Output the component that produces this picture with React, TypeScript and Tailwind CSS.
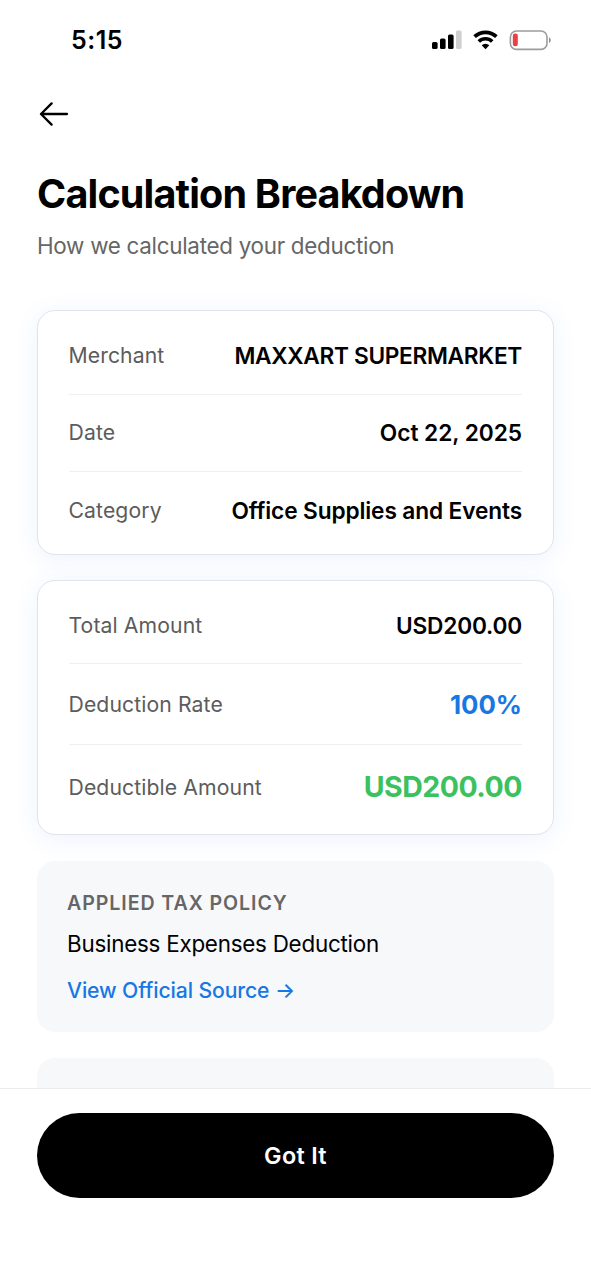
import React from 'react';
import clsx from 'clsx';

interface RowProps {
  label: string;
  value: string;
  rowClass: string;
  valueClass: string;
}

const merchantRows: RowProps[] = [
  {
    label: 'Merchant',
    value: 'MAXXART SUPERMARKET',
    rowClass: 'h-[77px] border-b',
    valueClass: 'text-[22.7px] tracking-[-0.32px] font-semibold text-black',
  },
  {
    label: 'Date',
    value: 'Oct 22, 2025',
    rowClass: 'h-[77px] border-b',
    valueClass: 'text-[22.7px] tracking-[-0.04px] font-semibold text-black',
  },
  {
    label: 'Category',
    value: 'Office Supplies and Events',
    rowClass: 'h-[78px]',
    valueClass: 'text-[22.7px] tracking-[-0.13px] font-semibold text-black',
  },
];

const amountRows: RowProps[] = [
  {
    label: 'Total Amount',
    value: 'USD200.00',
    rowClass: 'h-[78px] border-b pt-[3px]',
    valueClass: 'text-[22.7px] tracking-[-0.2px] font-semibold text-black',
  },
  {
    label: 'Deduction Rate',
    value: '100%',
    rowClass: 'h-[81px] border-b pt-[2px]',
    valueClass: 'text-[25.8px] font-bold text-[#1877e2]',
  },
  {
    label: 'Deductible Amount',
    value: 'USD200.00',
    rowClass: 'h-[84px] pt-px',
    valueClass: 'text-[28.5px] tracking-[-0.5px] font-bold text-[#3bc15e]',
  },
];

function StatusBar() {
  return (
    <div className="flex h-[80px] shrink-0 items-center justify-between pl-[71px] pr-[39px]">
      <span className="text-[25px] font-semibold leading-none tracking-[0.5px]">5:15</span>
      <div className="flex items-center">
        <svg width="30" height="20" viewBox="0 0 30 20">
          <rect x="0" y="12" width="5.6" height="7" rx="1.6" />
          <rect x="8" y="8.5" width="5.6" height="10.5" rx="1.6" />
          <rect x="16" y="4.5" width="5.6" height="14.5" rx="1.6" />
          <rect x="24" y="0.5" width="5.6" height="18.5" rx="1.6" fill="#cfcfcf" />
        </svg>
        <svg className="ml-[11px]" width="26" height="20" viewBox="0 0 26 20">
          <path d="M1.6 6.7a15.8 15.8 0 0 1 21.8 0" fill="none" stroke="#000" strokeWidth="3.8" />
          <path d="M5.8 11.5a9.6 9.6 0 0 1 13.4 0" fill="none" stroke="#000" strokeWidth="3.6" />
          <path d="M8.7 15.2a5.4 5.4 0 0 1 7.6 0l-3.8 4z" />
        </svg>
        <svg className="ml-[10px]" width="43" height="21" viewBox="0 0 43 21">
          <rect x="1.4" y="1" width="36.6" height="18.4" rx="6" fill="none" stroke="#9c9c9c" strokeWidth="1.6" />
          <rect x="3.8" y="3.6" width="5" height="12.6" rx="2.2" fill="#ea3e49" />
          <path d="M40 7.3c2.3 1 2.3 4.8 0 5.8z" fill="#8f8f8f" />
        </svg>
      </div>
    </div>
  );
}

function Row({ label, value, rowClass, valueClass }: RowProps) {
  return (
    <div className={clsx('flex items-center justify-between border-[#eff0f2]', rowClass)}>
      <span className="-ml-[0.5px] text-[21.2px] tracking-[0.1px] text-[#5c5c5c]">{label}</span>
      <span className={valueClass}>{value}</span>
    </div>
  );
}

function Card({ rows, className }: { rows: RowProps[]; className: string }) {
  return (
    <div
      className={clsx(
        'rounded-[18px] border border-[#dfe3ec] bg-white px-[31px] shadow-[0_4px_24px_rgba(60,110,240,0.09)]',
        className
      )}
    >
      {rows.map((row) => (
        <Row key={row.label} {...row} />
      ))}
    </div>
  );
}

export default function App() {
  return (
    <div className="flex h-[1280px] w-[591px] flex-col overflow-hidden bg-white font-['Inter',sans-serif] text-black">
      <StatusBar />

      <div className="h-[94px] shrink-0 pl-[39px] pt-[22px]">
        <button aria-label="Back" className="block">
          <svg width="30" height="24" viewBox="0 0 30 24" fill="none" stroke="#000" strokeWidth="2.3" strokeLinecap="round" strokeLinejoin="round">
            <path d="M28 12H2M12.6 1.4L2 12l10.6 10.6" />
          </svg>
        </button>
      </div>

      <main className="flex min-h-0 flex-1 flex-col px-[37px]">
        <div className="h-[136px] shrink-0">
          <h1 className="text-[39.5px] font-bold leading-[40px] tracking-[-0.82px]">Calculation Breakdown</h1>
          <p className="mt-[17px] text-[22.4px] leading-[30px] tracking-[-0.28px] text-[#666]">
            How we calculated your deduction
          </p>
        </div>

        <Card rows={merchantRows} className="pt-[7px] pb-[4px]" />
        <Card rows={amountRows} className="mt-[25px] pt-[5px] pb-[5px]" />

        <section className="mt-[26px] h-[171px] shrink-0 rounded-[18px] bg-[#f7f8fa] px-[30px] pt-[29px]">
          <h2 className="text-[19.6px] font-semibold leading-[27px] tracking-[0.92px] text-[#666]">APPLIED TAX POLICY</h2>
          <p className="mt-[12px] text-[22.4px] leading-[30px] tracking-[-0.24px]">Business Expenses Deduction</p>
          <a href="#" className="mt-[16px] block text-[21.2px] font-medium leading-[30px] tracking-[-0.12px] text-[#1877e2]">
            View Official Source →
          </a>
        </section>

        <section className="mt-[26px] h-[120px] shrink-0 rounded-[18px] bg-[#f7f8fa]" />
      </main>

      <footer className="h-[192px] shrink-0 border-t border-[#ececee] bg-white px-[37px] pt-[24px]">
        <button className="h-[85px] w-full rounded-full bg-black pt-px text-[23.4px] font-semibold tracking-[0.3px] text-white">
          Got It
        </button>
      </footer>
    </div>
  );
}
